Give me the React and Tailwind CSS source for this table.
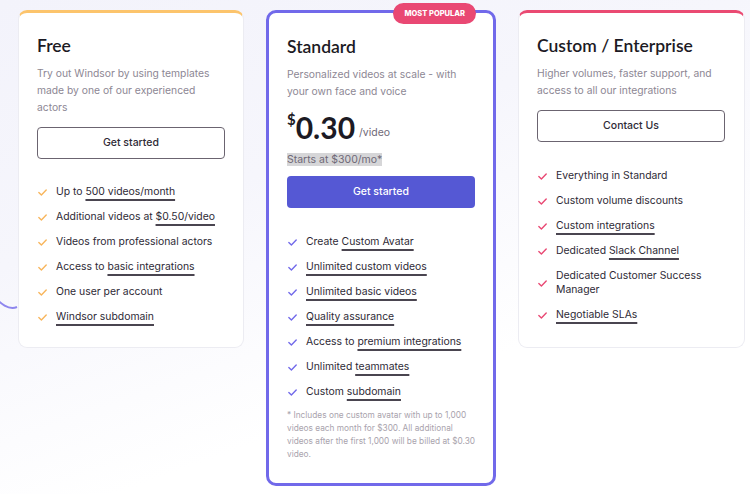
const Check = ({ color }) => (
  <svg width="9" height="7" viewBox="0 0 9 7" fill="none" className="shrink-0">
    <path d="M0.8 3.6 L3.4 6 L8.2 1" stroke={color} strokeWidth="1.4" strokeLinecap="round" strokeLinejoin="round" />
  </svg>
)

const U = ({ children }) => (
  <span className="underline decoration-[#4a4550] decoration-[1.5px] underline-offset-[4px]">{children}</span>
)

const Feature = ({ color, children }) => (
  <li className="flex items-center gap-[9px] py-[3px] pl-[1px] leading-[14px]">
    <Check color={color} />
    <span>{children}</span>
  </li>
)

const heading = "font-['Lato',sans-serif] font-semibold text-[17.5px] leading-[22px] text-[#1c1a24]"
const desc = "mt-2 text-[10.3px] leading-[17px] text-[#8d8794]"
const list = "flex flex-col gap-[5px] text-[10.4px] text-[#2e2a36]"

export default function App() {
  return (
    <div className="relative h-[494px] w-[750px] overflow-hidden bg-[linear-gradient(160deg,#f3f3fb_0%,#f6f6fc_35%,#ffffff_70%)] font-['Inter',sans-serif]">
      <svg className="absolute left-0 top-[268px]" width="30" height="60" viewBox="0 0 30 60" fill="none">
        <path d="M-10 22 C 0 38, 10 42, 17 39" stroke="#8e86ee" strokeWidth="2" />
      </svg>
      <div className="relative flex items-start gap-[22px] pl-[18px] pt-[10px]">
        {/* Free */}
        <div className="w-[226px] rounded-[9px] border border-[#ececf2] border-t-[3px] border-t-[#fcc46c] bg-white px-[18px] pb-[20px] pt-[22px]">
          <h2 className={heading}>Free</h2>
          <p className={desc}>Try out Windsor by using templates made by one of our experienced actors</p>
          <button className="mt-[11px] h-[32px] w-full rounded-[4px] border border-[#6b6470] text-[10.5px] font-medium text-[#2e2a36]">Get started</button>
          <ul className={`mt-[23px] ${list}`}>
            <Feature color="#f8b55b">Up to <U>500 videos/month</U></Feature>
            <Feature color="#f8b55b">Additional videos at <U>$0.50/video</U></Feature>
            <Feature color="#f8b55b">Videos from professional actors</Feature>
            <Feature color="#f8b55b">Access to <U>basic integrations</U></Feature>
            <Feature color="#f8b55b">One user per account</Feature>
            <Feature color="#f8b55b"><U>Windsor subdomain</U></Feature>
          </ul>
        </div>

        {/* Standard */}
        <div className="relative w-[230px] rounded-[10px] border-[3px] border-[#7169ea] bg-white px-[18px] pb-[22px] pt-[23px]">
          <span className="absolute right-[17px] top-[-10px] rounded-full bg-[#e94873] px-[11px] py-[6px] text-[7.5px] font-extrabold leading-[9px] text-white">MOST POPULAR</span>
          <h2 className={heading}>Standard</h2>
          <p className={desc}>Personalized videos at scale - with your own face and voice</p>
          <div className="mt-3 flex items-end font-['Lato',sans-serif] text-[#1c1a24]">
            <span className="self-start text-[15px] font-bold leading-[15px]">$</span>
            <span className="text-[30px] font-bold leading-[30px]">0.30</span>
            <span className="mb-[1px] ml-[4px] font-['Inter',sans-serif] text-[10.5px] text-[#6f6977]">/video</span>
          </div>
          <div className="mt-[8px] leading-[14px]">
            <span className="bg-[#d6d6d8] text-[10.5px] text-[#6f6977]">Starts at $300/mo*</span>
          </div>
          <button className="mt-[9px] h-[32px] w-full rounded-[4px] bg-[#5558d4] text-[10.5px] font-medium text-white">Get started</button>
          <ul className={`mt-[24px] ${list}`}>
            <Feature color="#7169ea">Create <U>Custom Avatar</U></Feature>
            <Feature color="#7169ea"><U>Unlimited custom videos</U></Feature>
            <Feature color="#7169ea"><U>Unlimited basic videos</U></Feature>
            <Feature color="#7169ea"><U>Quality assurance</U></Feature>
            <Feature color="#7169ea">Access to <U>premium integrations</U></Feature>
            <Feature color="#7169ea">Unlimited <U>teammates</U></Feature>
            <Feature color="#7169ea">Custom <U>subdomain</U></Feature>
          </ul>
          <p className="mt-[7px] text-[8.3px] leading-[13px] text-[#a9a3ad]">* Includes one custom avatar with up to 1,000 videos each month for $300. All additional videos after the first 1,000 will be billed at $0.30 video.</p>
        </div>

        {/* Enterprise */}
        <div className="w-[227px] rounded-[9px] border border-[#ececf2] border-t-[3px] border-t-[#ea4a72] bg-white pb-[22px] pl-[18px] pr-[19px] pt-[22px]">
          <h2 className={heading}>Custom / Enterprise</h2>
          <p className={desc}>Higher volumes, faster support, and access to all our integrations</p>
          <button className="mt-[11px] h-[32px] w-full rounded-[4px] border border-[#6b6470] text-[10.5px] font-medium text-[#2e2a36]">Contact Us</button>
          <ul className={`mt-[24px] ${list}`}>
            <Feature color="#e94873">Everything in Standard</Feature>
            <Feature color="#e94873">Custom volume discounts</Feature>
            <Feature color="#e94873"><U>Custom integrations</U></Feature>
            <Feature color="#e94873">Dedicated <U>Slack Channel</U></Feature>
            <Feature color="#e94873">Dedicated Customer Success Manager</Feature>
            <Feature color="#e94873"><U>Negotiable SLAs</U></Feature>
          </ul>
        </div>
      </div>
    </div>
  )
}
